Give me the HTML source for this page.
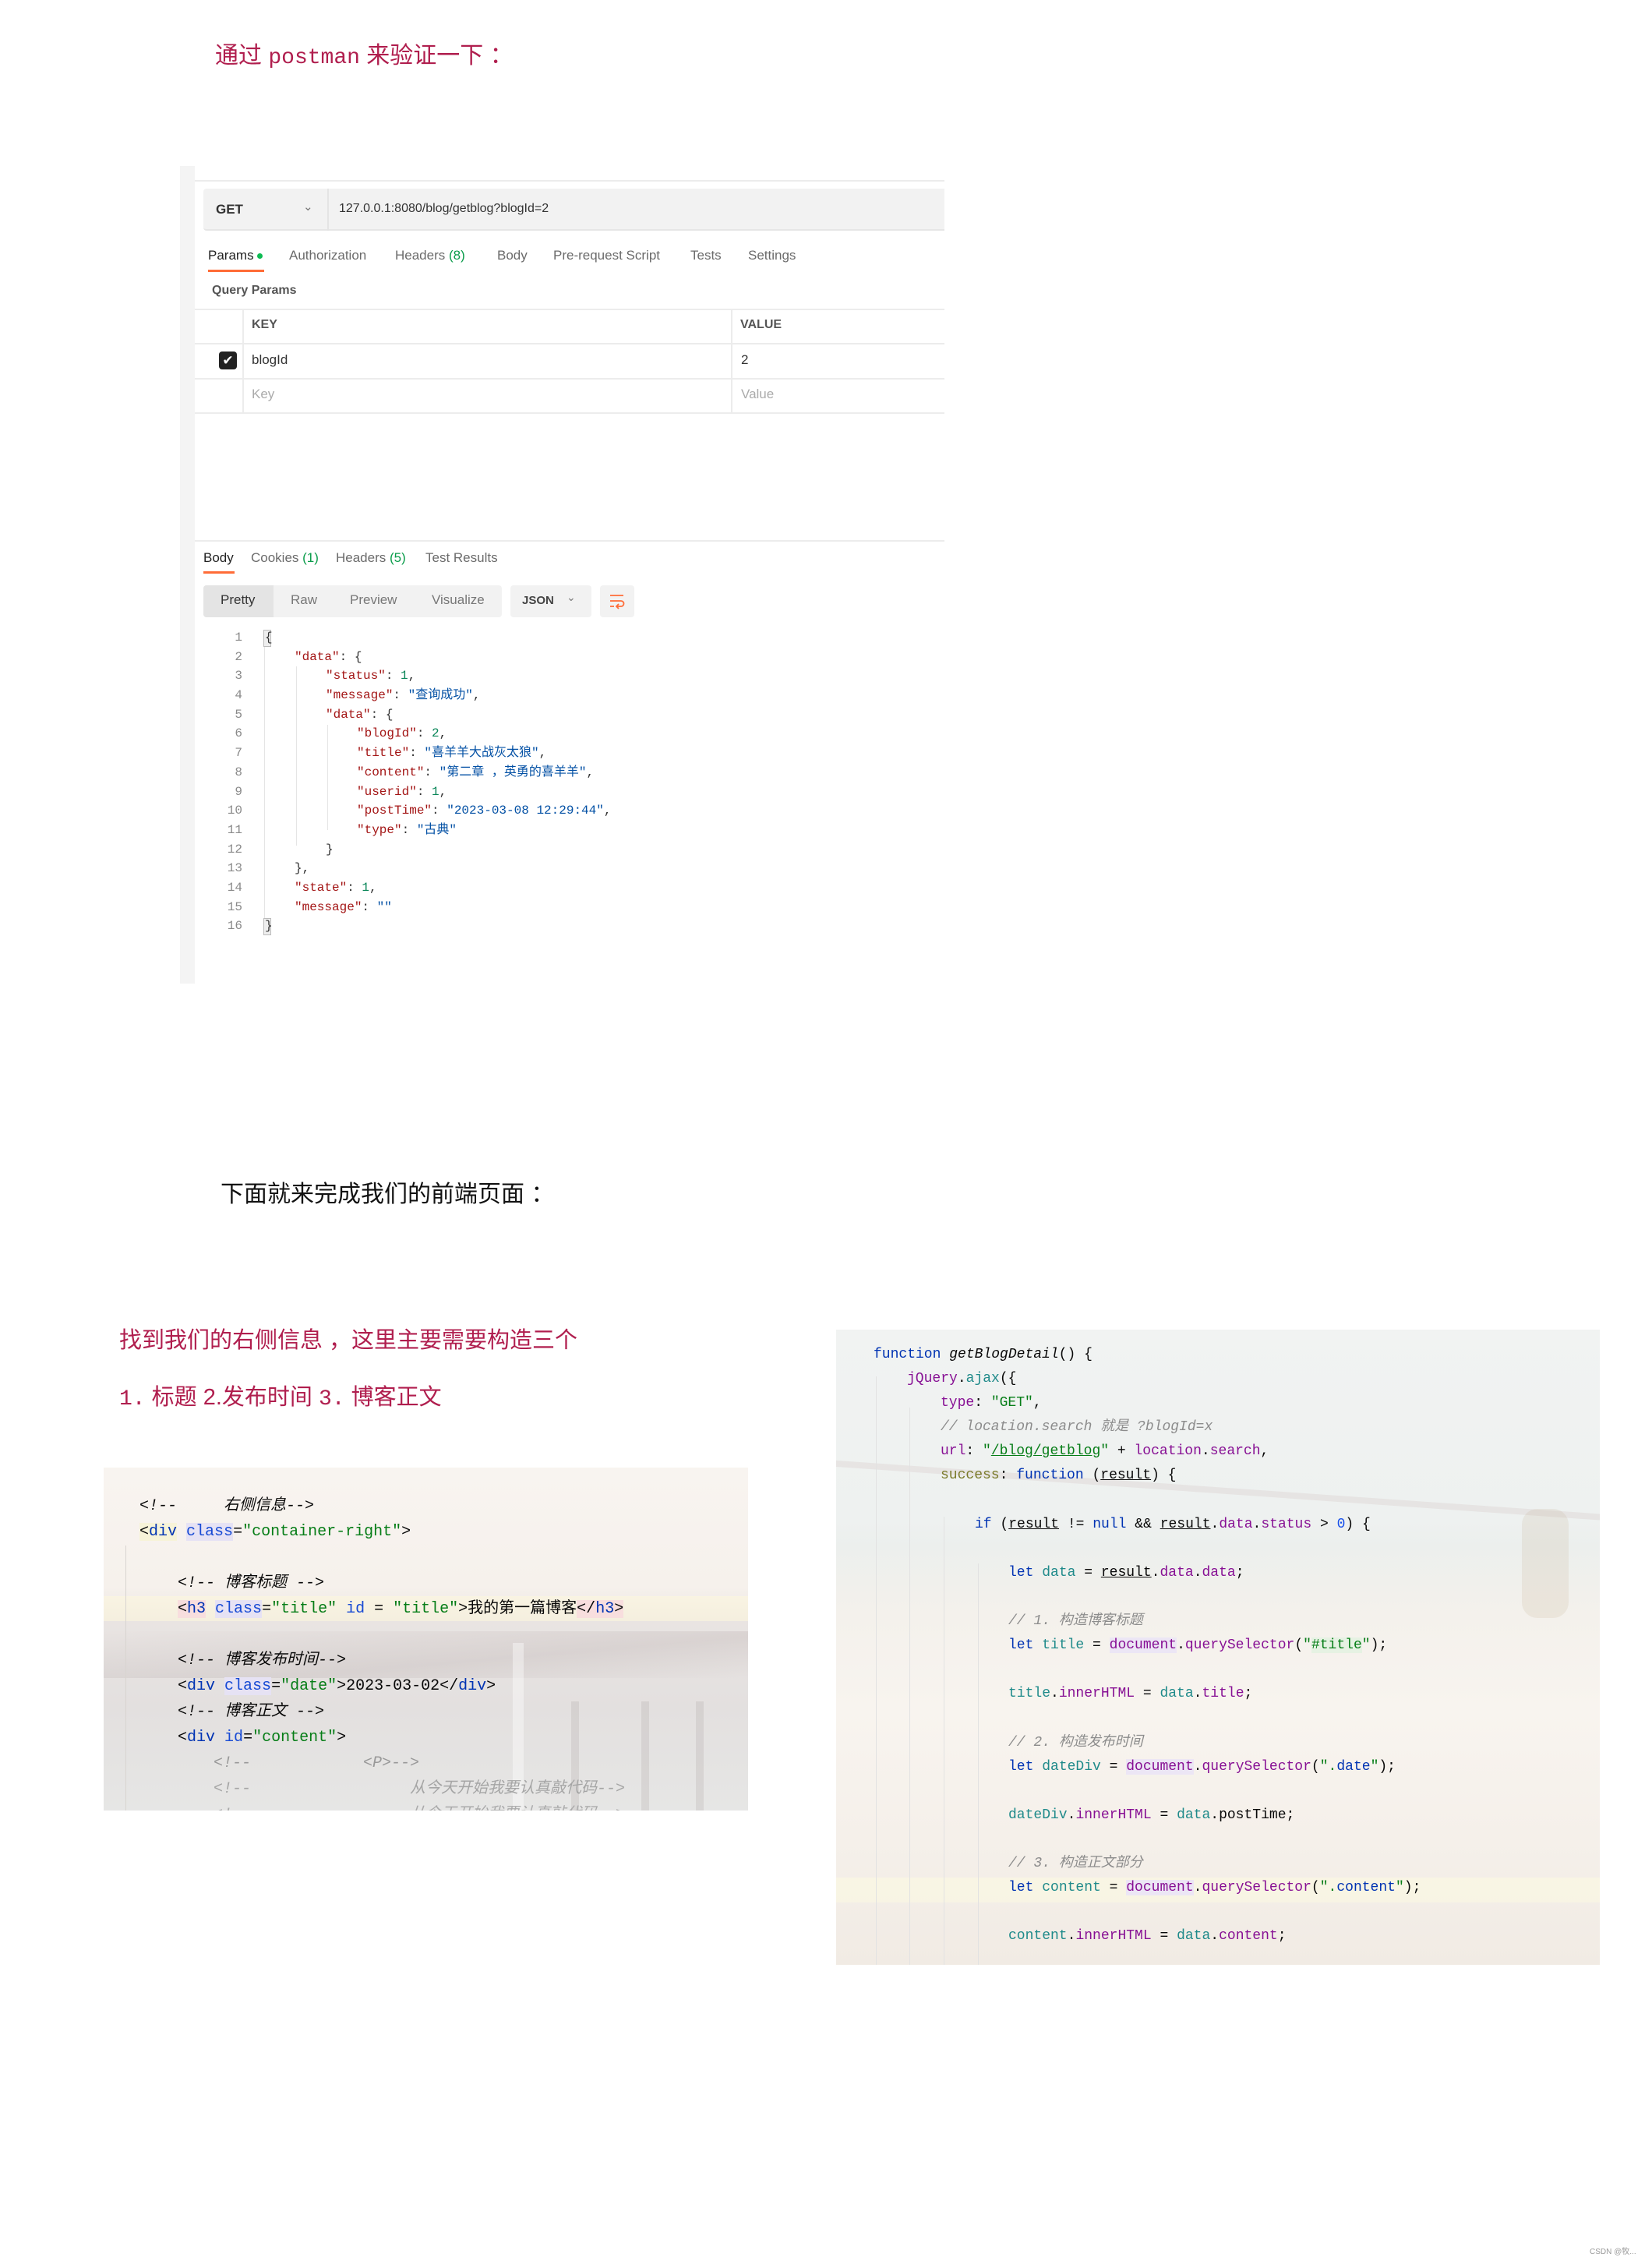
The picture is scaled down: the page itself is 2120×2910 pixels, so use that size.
<!DOCTYPE html>
<html><head><meta charset="utf-8"><style>
*{margin:0;padding:0;box-sizing:border-box}
body{width:2120px;height:2910px;background:#fff;position:relative;overflow:hidden;font-family:"Liberation Sans","Noto Sans CJK SC",sans-serif}
.a{position:absolute;white-space:nowrap}
.mono{font-family:"Liberation Mono","Noto Sans CJK SC",monospace}
.red{color:#b01e4e}
.tab{position:absolute;top:318px;font-size:17px;color:#6b6b6b}
.ln{position:absolute;width:40px;text-align:right;left:271px;font-size:16px;line-height:22px;color:#8a8a8a;font-family:"Liberation Mono",monospace}
.pc{position:absolute;font-size:16px;line-height:22px;height:22px;font-family:"Liberation Mono","Noto Sans CJK SC",monospace;color:#333;white-space:nowrap}
.k{color:#a31515}.s{color:#0451a5}.n{color:#098658}
.rc{position:absolute;font-size:18px;line-height:24px;height:24px;font-family:"Liberation Mono","Noto Sans CJK SC",monospace;color:#080808;white-space:nowrap}
.kw{color:#0033b3}.pr{color:#871094}.st{color:#067d17}.cm{color:#8c8c8c;font-style:italic}.lv{color:#1f8a8a}.u{text-decoration:underline}
.dc{background:#ece6f5;color:#871094}
.lc{position:absolute;font-size:20px;line-height:26px;height:26px;font-family:"Liberation Mono","Noto Sans CJK SC",monospace;color:#080808;white-space:nowrap}
.tg{color:#0033b3}.at{color:#174ad4}.atb{background:#e6e2f4}
</style></head><body>

<div class="a red" style="left:276px;top:46px;font-size:30px;font-family:'Liberation Sans','Noto Sans CJK SC',sans-serif">通过 <span class="mono" style="font-size:28px">postman</span> 来验证一下 ：</div>

<!-- Postman panel -->
<div class="a" style="left:231px;top:213px;width:19px;height:1049px;background:#f4f4f4"></div>
<div class="a" style="left:250px;top:231px;width:962px;height:2px;background:#ececec"></div>
<div class="a" style="left:261px;top:242px;width:951px;height:54px;background:#f2f2f2;border-radius:4px 0 0 4px;border-bottom:2px solid #e6e6e6"></div>
<div class="a" style="left:420px;top:242px;width:2px;height:54px;background:#e4e4e4"></div>
<div class="a" style="left:277px;top:259px;font-size:17px;font-weight:bold;color:#333">GET</div>
<div class="a" style="left:389px;top:256px;font-size:15px;color:#777">⌄</div>
<div class="a" style="left:435px;top:259px;font-size:16px;color:#333">127.0.0.1:8080/blog/getblog?blogId=2</div>

<div class="tab" style="left:267px;color:#222">Params <span style="display:inline-block;width:7px;height:7px;border-radius:50%;background:#0cbb52;vertical-align:middle"></span></div>
<div class="tab" style="left:371px">Authorization</div>
<div class="tab" style="left:507px">Headers <span style="color:#0a9c4a">(8)</span></div>
<div class="tab" style="left:638px">Body</div>
<div class="tab" style="left:710px">Pre-request Script</div>
<div class="tab" style="left:886px">Tests</div>
<div class="tab" style="left:960px">Settings</div>
<div class="a" style="left:267px;top:346px;width:72px;height:3px;background:#ff6c37"></div>

<div class="a" style="left:272px;top:364px;font-size:16px;font-weight:bold;color:#555">Query Params</div>
<div class="a" style="left:250px;top:396px;width:962px;height:2px;background:#ececec"></div>
<div class="a" style="left:250px;top:440px;width:962px;height:2px;background:#ececec"></div>
<div class="a" style="left:250px;top:485px;width:962px;height:2px;background:#ececec"></div>
<div class="a" style="left:250px;top:529px;width:962px;height:2px;background:#ececec"></div>
<div class="a" style="left:311px;top:396px;width:2px;height:135px;background:#ececec"></div>
<div class="a" style="left:938px;top:396px;width:2px;height:135px;background:#ececec"></div>
<div class="a" style="left:323px;top:408px;font-size:16px;font-weight:bold;color:#555">KEY</div>
<div class="a" style="left:950px;top:408px;font-size:16px;font-weight:bold;color:#555">VALUE</div>
<div class="a" style="left:281px;top:451px;width:23px;height:23px;background:#222;border-radius:4px;color:#fff;font-size:17px;line-height:23px;text-align:center">✔</div>
<div class="a" style="left:323px;top:452px;font-size:17px;color:#333">blogId</div>
<div class="a" style="left:951px;top:452px;font-size:17px;color:#333">2</div>
<div class="a" style="left:323px;top:496px;font-size:17px;color:#aaa">Key</div>
<div class="a" style="left:951px;top:496px;font-size:17px;color:#aaa">Value</div>

<div class="a" style="left:250px;top:693px;width:962px;height:2px;background:#ececec"></div>
<div class="a" style="left:261px;top:706px;font-size:17px;color:#222">Body</div>
<div class="a" style="left:322px;top:706px;font-size:17px;color:#6b6b6b">Cookies <span style="color:#0a9c4a">(1)</span></div>
<div class="a" style="left:431px;top:706px;font-size:17px;color:#6b6b6b">Headers <span style="color:#0a9c4a">(5)</span></div>
<div class="a" style="left:546px;top:706px;font-size:17px;color:#6b6b6b">Test Results</div>
<div class="a" style="left:261px;top:733px;width:40px;height:3px;background:#ff6c37"></div>

<div class="a" style="left:261px;top:751px;width:383px;height:41px;background:#f2f2f2;border-radius:4px"></div>
<div class="a" style="left:261px;top:751px;width:90px;height:41px;background:#e4e4e4;border-radius:4px 0 0 4px"></div>
<div class="a" style="left:283px;top:760px;font-size:17px;color:#333">Pretty</div>
<div class="a" style="left:373px;top:760px;font-size:17px;color:#777">Raw</div>
<div class="a" style="left:449px;top:760px;font-size:17px;color:#777">Preview</div>
<div class="a" style="left:554px;top:760px;font-size:17px;color:#777">Visualize</div>
<div class="a" style="left:655px;top:751px;width:104px;height:41px;background:#f2f2f2;border-radius:4px"></div>
<div class="a" style="left:670px;top:762px;font-size:15px;font-weight:bold;color:#444">JSON</div>
<div class="a" style="left:727px;top:758px;font-size:14px;color:#777">⌄</div>
<div class="a" style="left:770px;top:751px;width:44px;height:41px;background:#f2f2f2;border-radius:4px"></div>
<svg class="a" style="left:780px;top:760px" width="24" height="24" viewBox="0 0 24 24" fill="none" stroke="#ff6c37" stroke-width="1.8"><path d="M3 4h17M3 11h14a3.5 3.5 0 0 1 0 7h-5M14 15l-3 3 3 3M3 18h5"/></svg>

<!-- response code -->
<div class="a" style="left:338px;top:808px;width:10px;height:22px;border:1px solid #bbb;background:#eee"></div>
<div class="a" style="left:338px;top:1178px;width:10px;height:22px;border:1px solid #bbb;background:#eee"></div>
<div class="a" style="left:339px;top:830px;width:1px;height:348px;background:#e5e5e5"></div>
<div class="a" style="left:380px;top:855px;width:1px;height:230px;background:#e5e5e5"></div>
<div class="a" style="left:420px;top:930px;width:1px;height:135px;background:#e5e5e5"></div>
<div class="ln" style="top:807px">1</div><div class="ln" style="top:832px">2</div><div class="ln" style="top:856px">3</div><div class="ln" style="top:881px">4</div><div class="ln" style="top:906px">5</div><div class="ln" style="top:930px">6</div><div class="ln" style="top:955px">7</div><div class="ln" style="top:980px">8</div><div class="ln" style="top:1005px">9</div><div class="ln" style="top:1029px">10</div><div class="ln" style="top:1054px">11</div><div class="ln" style="top:1079px">12</div><div class="ln" style="top:1103px">13</div><div class="ln" style="top:1128px">14</div><div class="ln" style="top:1153px">15</div><div class="ln" style="top:1177px">16</div>
<div class="pc" style="left:340px;top:807px">{</div>
<div class="pc" style="left:378px;top:832px"><span class="k">"data"</span>: {</div>
<div class="pc" style="left:418px;top:856px"><span class="k">"status"</span>: <span class="n">1</span>,</div>
<div class="pc" style="left:418px;top:881px"><span class="k">"message"</span>: <span class="s">"查询成功"</span>,</div>
<div class="pc" style="left:418px;top:906px"><span class="k">"data"</span>: {</div>
<div class="pc" style="left:458px;top:930px"><span class="k">"blogId"</span>: <span class="n">2</span>,</div>
<div class="pc" style="left:458px;top:955px"><span class="k">"title"</span>: <span class="s">"喜羊羊大战灰太狼"</span>,</div>
<div class="pc" style="left:458px;top:980px"><span class="k">"content"</span>: <span class="s">"第二章 ，英勇的喜羊羊"</span>,</div>
<div class="pc" style="left:458px;top:1005px"><span class="k">"userid"</span>: <span class="n">1</span>,</div>
<div class="pc" style="left:458px;top:1029px"><span class="k">"postTime"</span>: <span class="s">"2023-03-08 12:29:44"</span>,</div>
<div class="pc" style="left:458px;top:1054px"><span class="k">"type"</span>: <span class="s">"古典"</span></div>
<div class="pc" style="left:418px;top:1079px">}</div>
<div class="pc" style="left:378px;top:1103px">},</div>
<div class="pc" style="left:378px;top:1128px"><span class="k">"state"</span>: <span class="n">1</span>,</div>
<div class="pc" style="left:378px;top:1153px"><span class="k">"message"</span>: <span class="s">""</span></div>
<div class="pc" style="left:340px;top:1177px">}</div>

<div class="a" style="left:283px;top:1507px;font-size:30px;color:#111;font-family:'Liberation Sans','Noto Sans CJK SC',sans-serif">下面就来完成我们的前端页面 ：</div>

<div class="a red" style="left:153px;top:1696px;font-size:29px;font-family:'Liberation Sans','Noto Sans CJK SC',sans-serif">找到我们的右侧信息 ，这里主要需要构造三个</div>
<div class="a red" style="left:153px;top:1769px;font-size:29px;font-family:'Liberation Sans','Noto Sans CJK SC',sans-serif"><span class="mono" style="font-size:28px">1.</span> 标题 2.发布时间 <span class="mono" style="font-size:28px">3.</span> 博客正文</div>

<!-- left code image -->
<div class="a" style="left:133px;top:1883px;width:827px;height:440px;background:linear-gradient(180deg,#f8f4f0 0%,#f6f1ec 35%,#e9e4e2 45%,#e3e0df 70%,#e6e6e5 100%);overflow:hidden">
 <div class="a" style="left:0;top:165px;width:827px;height:32px;background:rgba(255,250,220,.5)"></div>
 <div class="a" style="left:0;top:210px;width:827px;height:60px;background:linear-gradient(175deg,rgba(200,190,190,.0),rgba(190,180,180,.35) 60%,rgba(200,195,195,0))"></div>
 <div class="a" style="left:525px;top:225px;width:14px;height:215px;background:rgba(255,255,255,.4)"></div>
 <div class="a" style="left:600px;top:300px;width:10px;height:140px;background:rgba(160,150,150,.2)"></div>
 <div class="a" style="left:690px;top:300px;width:10px;height:140px;background:rgba(160,150,150,.2)"></div>
 <div class="a" style="left:760px;top:300px;width:10px;height:140px;background:rgba(160,150,150,.2)"></div>
 <div class="a" style="left:28px;top:100px;width:1px;height:340px;background:#d8d4d0"></div>
</div>
<div class="lc cm" style="left:179px;top:1920px">&lt;!--&nbsp;&nbsp;&nbsp;&nbsp;&nbsp;右侧信息--&gt;</div>
<div class="lc" style="left:179px;top:1953px"><span style="background:#f7f3d8">&lt;<span class="tg">div</span></span> <span class="at atb">class</span>=<span class="st">"container-right"</span>&gt;</div>
<div class="lc cm" style="left:228px;top:2019px">&lt;!-- 博客标题 --&gt;</div>
<div class="lc" style="left:228px;top:2052px"><span style="background:#f8dede">&lt;<span class="tg">h3</span></span> <span class="at atb">class</span>=<span class="st">"title"</span> <span class="at">id</span> = <span class="st">"title"</span>&gt;我的第一篇博客<span style="background:#f8dede">&lt;/<span class="tg">h3</span>&gt;</span></div>
<div class="lc cm" style="left:228px;top:2118px">&lt;!-- 博客发布时间--&gt;</div>
<div class="lc" style="left:228px;top:2151px">&lt;<span class="tg">div</span> <span class="at atb">class</span>=<span class="st">"date"</span>&gt;2023-03-02&lt;/<span class="tg">div</span>&gt;</div>
<div class="lc cm" style="left:228px;top:2184px">&lt;!-- 博客正文 --&gt;</div>
<div class="lc" style="left:228px;top:2217px">&lt;<span class="tg">div</span> <span class="at">id</span>=<span class="st">"content"</span>&gt;</div>
<div class="lc cm" style="left:274px;top:2250px;color:#999">&lt;!--&nbsp;&nbsp;&nbsp;&nbsp;&nbsp;&nbsp;&nbsp;&nbsp;&nbsp;&nbsp;&nbsp;&nbsp;&lt;P&gt;--&gt;</div>
<div class="lc cm" style="left:274px;top:2283px;color:#a5a5a5">&lt;!--&nbsp;&nbsp;&nbsp;&nbsp;&nbsp;&nbsp;&nbsp;&nbsp;&nbsp;&nbsp;&nbsp;&nbsp;&nbsp;&nbsp;&nbsp;&nbsp;&nbsp;从今天开始我要认真敲代码--&gt;</div>
<div class="a" style="left:133px;top:2312px;width:827px;height:11px;overflow:hidden"><div class="lc cm" style="left:141px;top:4px;color:#aaa">&lt;!--&nbsp;&nbsp;&nbsp;&nbsp;&nbsp;&nbsp;&nbsp;&nbsp;&nbsp;&nbsp;&nbsp;&nbsp;&nbsp;&nbsp;&nbsp;&nbsp;&nbsp;从今天开始我要认真敲代码--&gt;</div></div>

<!-- right code image -->
<div class="a" style="left:1073px;top:1706px;width:980px;height:815px;background:linear-gradient(180deg,#f1f3f2 0%,#eef1f0 30%,#ecefed 34%,#f4f1ec 45%,#f8f4ef 60%,#f5f0ea 80%,#f1ebe4 100%);overflow:hidden">
 <div class="a" style="left:-20px;top:205px;width:1100px;height:8px;background:rgba(200,180,175,.2);transform:rotate(4deg)"></div>
 <div class="a" style="left:880px;top:230px;width:60px;height:140px;background:rgba(190,160,130,.15);border-radius:20px"></div>
 <div class="a" style="left:0;top:703px;width:980px;height:32px;background:rgba(255,252,225,.45)"></div>
 <div class="a" style="left:51px;top:60px;width:1px;height:755px;background:#e2e2e2"></div>
 <div class="a" style="left:94px;top:100px;width:1px;height:715px;background:#e2e2e2"></div>
 <div class="a" style="left:138px;top:240px;width:1px;height:575px;background:#e2e2e2"></div>
 <div class="a" style="left:182px;top:300px;width:1px;height:515px;background:#e2e2e2"></div>
</div>
<div class="rc" style="left:1121px;top:1726px"><span class="kw">function</span> <i>getBlogDetail</i>() {</div>
<div class="rc" style="left:1164px;top:1757px"><span class="pr">jQuery</span>.<span class="lv">ajax</span>({</div>
<div class="rc" style="left:1207px;top:1788px"><span class="pr">type</span>: <span class="st">"GET"</span>,</div>
<div class="rc cm" style="left:1207px;top:1819px">// location.search 就是 ?blogId=x</div>
<div class="rc" style="left:1207px;top:1850px"><span class="pr">url</span>: <span class="st">"<u>/blog/getblog</u>"</span> + <span class="pr">location</span>.<span class="pr">search</span>,</div>
<div class="rc" style="left:1207px;top:1881px"><span style="color:#7a7a2a">success</span>: <span class="kw">function</span> (<span class="u">result</span>) {</div>
<div class="rc" style="left:1251px;top:1944px"><span class="kw">if</span> (<span class="u">result</span> != <span class="kw">null</span> &amp;&amp; <span class="u">result</span>.<span class="pr">data</span>.<span class="pr">status</span> &gt; <span style="color:#1750eb">0</span>) {</div>
<div class="rc" style="left:1294px;top:2006px"><span class="kw">let</span> <span class="lv">data</span> = <span class="u">result</span>.<span class="pr">data</span>.<span class="pr">data</span>;</div>
<div class="rc cm" style="left:1294px;top:2068px">// 1. 构造博客标题</div>
<div class="rc" style="left:1294px;top:2099px"><span class="kw">let</span> <span class="lv">title</span> = <span class="dc">document</span>.<span class="pr">querySelector</span>(<span class="st">"<b style="font-weight:normal;background:#e6f2e3">#title</b>"</span>);</div>
<div class="rc" style="left:1294px;top:2161px"><span class="lv">title</span>.<span class="pr">innerHTML</span> = <span class="lv">data</span>.<span class="pr">title</span>;</div>
<div class="rc cm" style="left:1294px;top:2224px">// 2. 构造发布时间</div>
<div class="rc" style="left:1294px;top:2255px"><span class="kw">let</span> <span class="lv">dateDiv</span> = <span class="dc">document</span>.<span class="pr">querySelector</span>(<span class="st">".<span class="kw">date</span>"</span>);</div>
<div class="rc" style="left:1294px;top:2317px"><span class="lv">dateDiv</span>.<span class="pr">innerHTML</span> = <span class="lv">data</span>.postTime;</div>
<div class="rc cm" style="left:1294px;top:2379px">// 3. 构造正文部分</div>
<div class="rc" style="left:1294px;top:2410px"><span class="kw">let</span> <span class="lv">content</span> = <span class="dc">document</span>.<span class="pr">querySelector</span>(<span class="st">".<span class="kw">content</span>"</span>);</div>
<div class="rc" style="left:1294px;top:2472px"><span class="lv">content</span>.<span class="pr">innerHTML</span> = <span class="lv">data</span>.<span class="pr">content</span>;</div>

<div class="a" style="left:2040px;top:2880px;font-size:10px;color:#999">CSDN @牧...</div>
</body></html>
